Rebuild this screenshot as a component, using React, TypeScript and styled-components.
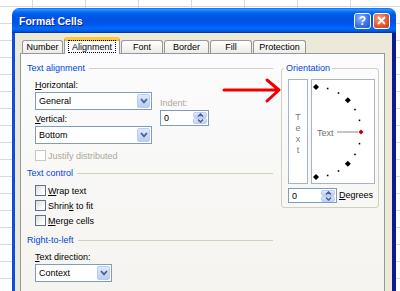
import styled, { createGlobalStyle } from 'styled-components';

const GlobalStyle = createGlobalStyle`
  html, body {
    margin: 0;
    padding: 0;
  }
  body {
    width: 400px;
    height: 291px;
    overflow: hidden;
    font-family: "Liberation Sans", Arial, sans-serif;
    background-color: #ffffff;
    background-image:
      linear-gradient(to right, #d8dade 1px, transparent 1px),
      linear-gradient(to bottom, #d8dade 1px, transparent 1px);
    background-size: 53px 100%, 100% 17px;
    background-position: 32px 0, 0 6px;
  }
`;

const Desktop = styled.div`
  position: relative;
  width: 400px;
  height: 291px;
  overflow: hidden;
  box-sizing: border-box;
  padding: 8px 0 0 12px;
`;

const Window = styled.div`
  width: 384px;
  height: 300px;
  display: flex;
  flex-direction: column;
`;

const TitleBar = styled.div`
  flex: none;
  height: 25px;
  box-sizing: border-box;
  display: flex;
  align-items: center;
  gap: 2px;
  padding: 0 6px 0 7px;
  border-radius: 7px 7px 0 0;
  background: linear-gradient(
    to bottom,
    #0058ee 0%,
    #3a93ff 4%,
    #288eff 8%,
    #127dff 12%,
    #036ffc 16%,
    #0262ee 22%,
    #0057e5 30%,
    #0054e3 40%,
    #0055eb 60%,
    #005bf5 70%,
    #026afe 80%,
    #0062ef 88%,
    #0052d6 94%,
    #003092 100%
  );
`;

const Title = styled.span`
  flex: 1;
  color: #ffffff;
  font-size: 10.5px;
  font-weight: bold;
  text-shadow: 1px 1px 0 #0a1e8c;
  padding-top: 1px;
`;

const CaptionButton = styled.div<{ $kind: 'help' | 'close' }>`
  width: 17px;
  height: 16px;
  box-sizing: border-box;
  border: 1px solid #ffffff;
  border-radius: 3px;
  display: flex;
  align-items: center;
  justify-content: center;
  color: #ffffff;
  font-size: 12px;
  font-weight: bold;
  background: ${(p) =>
    p.$kind === 'close'
      ? 'radial-gradient(circle at 35% 30%, #f5a07e 0%, #e35b2f 55%, #c4411a 100%)'
      : 'radial-gradient(circle at 35% 30%, #8db4fb 0%, #3b74ea 55%, #1f55d2 100%)'};
`;

const Client = styled.div`
  flex: 1;
  display: flex;
  flex-direction: column;
  background: #ece9d8;
  border-left: 3px solid #0c4fde;
  border-right: 4px solid #0a1b94;
  padding: 4px 7px 0 5px;
`;

const TabStrip = styled.div`
  display: flex;
  align-items: flex-end;
  height: 16px;
  padding-left: 2px;
  position: relative;
  z-index: 1;
`;

const Tab = styled.div<{ $w: number; $active?: boolean }>`
  width: ${(p) => p.$w}px;
  margin-right: 1px;
  box-sizing: border-box;
  display: flex;
  align-items: center;
  justify-content: center;
  font-size: 9px;
  color: #000000;
  border: 1px solid #919b9c;
  border-bottom: none;
  border-radius: 3px 3px 0 0;
  height: ${(p) => (p.$active ? 17 : 13)}px;
  margin-bottom: ${(p) => (p.$active ? -1 : 0)}px;
  background: ${(p) =>
    p.$active ? '#fcfcfe' : 'linear-gradient(to bottom, #ffffff, #ecebe6)'};
  ${(p) =>
    p.$active &&
    `
    border-top: 3px solid #ffc83c;
    box-shadow: inset 0 1px 0 #f7b52f;
    padding-bottom: 1px;
  `}
`;

const FocusLabel = styled.span`
  border: 1px dotted #000000;
  padding: 1px 3px 0;
  line-height: 10px;
`;

const Panel = styled.div`
  flex: 1;
  border: 1px solid #919b9c;
  background: linear-gradient(to bottom, #fcfcfe, #f4f3ee);
  padding: 8px 5px 0 6px;
  display: flex;
  gap: 8px;
  align-items: flex-start;
`;

const LeftColumn = styled.div`
  width: 246px;
  display: flex;
  flex-direction: column;
`;

const GroupHeader = styled.div<{ $mt?: number }>`
  display: flex;
  align-items: center;
  gap: 4px;
  height: 12px;
  margin-top: ${(p) => p.$mt ?? 0}px;
  font-size: 9px;
  color: #0046d5;

  &::after {
    content: '';
    flex: 1;
    height: 1px;
    background: #d0d0bf;
  }
`;

const Section = styled.div`
  padding-left: 8px;
  display: flex;
  flex-direction: column;
`;

const FieldRow = styled.div`
  display: flex;
  gap: 8px;
  margin-top: 5px;
`;

const FieldColumn = styled.div<{ $pt?: number }>`
  display: flex;
  flex-direction: column;
  padding-top: ${(p) => p.$pt ?? 0}px;
`;

const FieldLabel = styled.div<{ $mt?: number; $disabled?: boolean }>`
  height: 12px;
  line-height: 12px;
  font-size: 9px;
  margin-top: ${(p) => p.$mt ?? 0}px;
  color: ${(p) => (p.$disabled ? '#aca899' : '#000000')};
  white-space: nowrap;
`;

const Combo = styled.div<{ $w: number; $h?: number }>`
  width: ${(p) => p.$w}px;
  height: ${(p) => p.$h ?? 18}px;
  margin-top: 1px;
  box-sizing: border-box;
  border: 1px solid #7f9db9;
  background: #ffffff;
  display: flex;
  align-items: stretch;
  padding: 1px;
`;

const ComboText = styled.span`
  flex: 1;
  display: flex;
  align-items: center;
  padding-left: 2px;
  font-size: 9px;
  color: #000000;
`;

const DropButton = styled.span`
  width: 13px;
  box-sizing: border-box;
  border: 1px solid #b9cdf7;
  border-radius: 2px;
  background: linear-gradient(to bottom, #dfe8fd, #b8cdf8);
  display: flex;
  align-items: center;
  justify-content: center;
`;

const SpinButtons = styled.span`
  width: 14px;
  display: flex;
  flex-direction: column;
  gap: 0;
`;

const SpinHalf = styled.span`
  flex: 1;
  box-sizing: border-box;
  border: 1px solid #b9cdf7;
  border-radius: 2px;
  background: linear-gradient(to bottom, #dfe8fd, #bdd0f8);
  display: flex;
  align-items: center;
  justify-content: center;
`;

const CheckRow = styled.label<{ $disabled?: boolean }>`
  display: flex;
  align-items: center;
  gap: 2px;
  height: 15px;
  font-size: 9px;
  color: ${(p) => (p.$disabled ? '#aca899' : '#000000')};
`;

const CheckBox = styled.span<{ $disabled?: boolean }>`
  width: 11px;
  height: 11px;
  box-sizing: border-box;
  border: 1px solid ${(p) => (p.$disabled ? '#cac8bb' : '#5a7394')};
  background: ${(p) =>
    p.$disabled ? '#ffffff' : 'linear-gradient(135deg, #dcdcd6, #ffffff 80%)'};
`;

const OrientationBox = styled.fieldset`
  margin: 0;
  width: 98px;
  box-sizing: border-box;
  border: 1px solid #d0d0bf;
  border-radius: 3px;
  padding: 5px 3px 4px 6px;
  min-width: 0;
`;

const Legend = styled.legend`
  font-size: 9px;
  line-height: 12px;
  color: #0046d5;
  padding: 0 2px;
  margin-left: -4px;
`;

const DialRow = styled.div`
  display: flex;
  gap: 3px;
`;

const VerticalText = styled.div`
  width: 20px;
  height: 105px;
  box-sizing: border-box;
  border: 1px solid #a7b4c6;
  background: #ffffff;
  display: flex;
  flex-direction: column;
  align-items: center;
  justify-content: center;
  padding-top: 4px;
  font-size: 9px;
  line-height: 11px;
  color: #7b7b7b;
`;

const DialBox = styled.div`
  width: 64px;
  height: 105px;
  box-sizing: border-box;
  border: 1px solid #a7b4c6;
  background: #ffffff;
`;

const DegreesRow = styled.div`
  display: flex;
  align-items: center;
  gap: 2px;
  margin-top: 3px;
  font-size: 9px;
`;

const ArrowOverlay = styled.svg`
  position: absolute;
  left: 220px;
  top: 76px;
`;

const Chevron = ({ up }: { up?: boolean }) => (
  <svg width="7" height="4" viewBox="0 0 7 4">
    <path
      d={up ? 'M1 3.5 L3.5 1 L6 3.5' : 'M1 0.5 L3.5 3 L6 0.5'}
      fill="none"
      stroke="#4d6185"
      strokeWidth="1.5"
    />
  </svg>
);

const DropChevron = () => (
  <svg width="8" height="6" viewBox="0 0 8 6">
    <path d="M1 1 L4 4.3 L7 1" fill="none" stroke="#4d6185" strokeWidth="1.8" />
  </svg>
);

const ComboBox = ({ value, w }: { value: string; w: number }) => (
  <Combo $w={w}>
    <ComboText>{value}</ComboText>
    <DropButton>
      <DropChevron />
    </DropButton>
  </Combo>
);

const Spin = ({ value, w, h }: { value: string; w: number; h: number }) => (
  <Combo $w={w} $h={h}>
    <ComboText>{value}</ComboText>
    <SpinButtons>
      <SpinHalf>
        <Chevron up />
      </SpinHalf>
      <SpinHalf>
        <Chevron />
      </SpinHalf>
    </SpinButtons>
  </Combo>
);

const Check = ({ label, disabled }: { label: React.ReactNode; disabled?: boolean }) => (
  <CheckRow $disabled={disabled}>
    <CheckBox $disabled={disabled} />
    {label}
  </CheckRow>
);

// dial drawn around the left edge of the box
const Dial = () => {
  const cx = 4;
  const cy = 52;
  const r = 45;
  const angles = [90, 75, 60, 45, 30, 15, -15, -30, -45, -60, -75, -90];
  return (
    <svg width="62" height="103" viewBox="0 0 62 103">
      {angles.map((a) => {
        const rad = (a * Math.PI) / 180;
        const x = cx + r * Math.cos(rad);
        const y = cy - r * Math.sin(rad);
        const big = a % 45 === 0;
        return big ? (
          <path
            key={a}
            d={`M${x} ${y - 3} L${x + 3} ${y} L${x} ${y + 3} L${x - 3} ${y} Z`}
            fill="#000000"
          />
        ) : (
          <rect key={a} x={x - 0.8} y={y - 0.8} width="1.6" height="1.6" fill="#000000" />
        );
      })}
      <text
        x="5"
        y="55.5"
        fontSize="9"
        fill="#6f6f6f"
        fontFamily='"Liberation Sans", Arial, sans-serif'
      >
        Text
      </text>
      <line x1="25" y1="52" x2="46" y2="52" stroke="#8a8a8a" strokeWidth="1" />
      <path d="M49 49.5 L51.5 52 L49 54.5 L46.5 52 Z" fill="#c00000" />
    </svg>
  );
};

export default function App() {
  return (
    <>
      <GlobalStyle />
      <Desktop>
        <Window>
          <TitleBar>
            <Title>Format Cells</Title>
            <CaptionButton $kind="help">?</CaptionButton>
            <CaptionButton $kind="close">
              <svg width="9" height="9" viewBox="0 0 9 9">
                <path d="M1 1 L8 8 M8 1 L1 8" stroke="#ffffff" strokeWidth="1.8" />
              </svg>
            </CaptionButton>
          </TitleBar>
          <Client>
            <TabStrip>
              <Tab $w={41}>Number</Tab>
              <Tab $w={56} $active>
                <FocusLabel>Alignment</FocusLabel>
              </Tab>
              <Tab $w={42}>Font</Tab>
              <Tab $w={45}>Border</Tab>
              <Tab $w={42}>Fill</Tab>
              <Tab $w={53}>Protection</Tab>
            </TabStrip>
            <Panel>
              <LeftColumn>
                <GroupHeader>Text alignment</GroupHeader>
                <Section>
                  <FieldRow>
                    <FieldColumn>
                      <FieldLabel>
                        <u>H</u>orizontal:
                      </FieldLabel>
                      <ComboBox value="General" w={117} />
                      <FieldLabel $mt={3}>
                        <u>V</u>ertical:
                      </FieldLabel>
                      <ComboBox value="Bottom" w={117} />
                    </FieldColumn>
                    <FieldColumn $pt={18}>
                      <FieldLabel $disabled>Indent:</FieldLabel>
                      <Spin value="0" w={49} h={16} />
                    </FieldColumn>
                  </FieldRow>
                  <div style={{ marginTop: 4 }} />
                  <Check label="Justify distributed" disabled />
                </Section>
                <GroupHeader $mt={4}>Text control</GroupHeader>
                <Section>
                  <div style={{ marginTop: 4 }} />
                  <Check
                    label={
                      <span>
                        <u>W</u>rap text
                      </span>
                    }
                  />
                  <Check
                    label={
                      <span>
                        Shrin<u>k</u> to fit
                      </span>
                    }
                  />
                  <Check
                    label={
                      <span>
                        <u>M</u>erge cells
                      </span>
                    }
                  />
                </Section>
                <GroupHeader $mt={6}>Right-to-left</GroupHeader>
                <Section>
                  <FieldLabel $mt={5}>
                    <u>T</u>ext direction:
                  </FieldLabel>
                  <ComboBox value="Context" w={77} />
                </Section>
              </LeftColumn>
              <OrientationBox>
                <Legend>Orientation</Legend>
                <DialRow>
                  <VerticalText>
                    <span>T</span>
                    <span>e</span>
                    <span>x</span>
                    <span>t</span>
                  </VerticalText>
                  <DialBox>
                    <Dial />
                  </DialBox>
                </DialRow>
                <DegreesRow>
                  <Spin value="0" w={49} h={15} />
                  <span>
                    <u>D</u>egrees
                  </span>
                </DegreesRow>
              </OrientationBox>
            </Panel>
          </Client>
        </Window>
        <ArrowOverlay width="64" height="30" viewBox="0 0 64 30">
          <path
            d="M4 14 L58 14 M47 4 L59 14 L47 25"
            fill="none"
            stroke="#ee0000"
            strokeWidth="3"
            strokeLinecap="round"
            strokeLinejoin="round"
          />
        </ArrowOverlay>
      </Desktop>
    </>
  );
}
